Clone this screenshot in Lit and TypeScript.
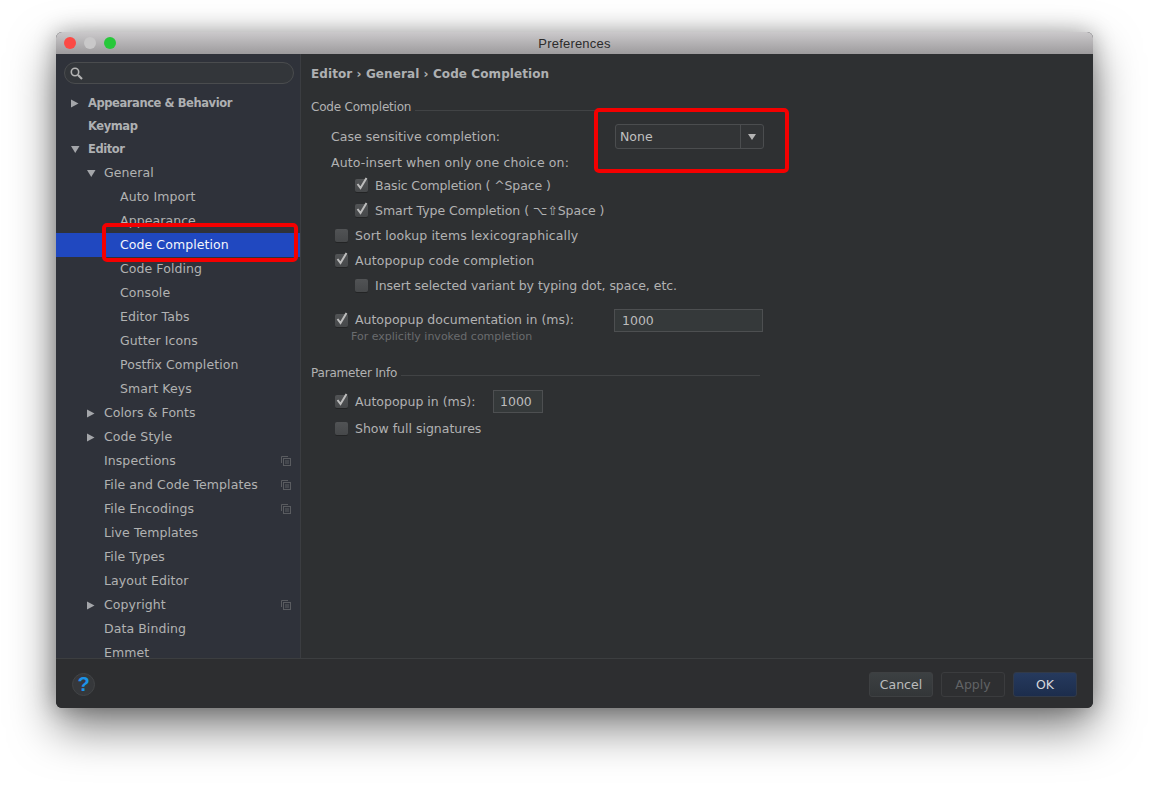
import { LitElement, html, css, svg } from "lit";
import { customElement } from "lit/decorators.js";

type Node = { t: string; lv: number; arrow?: "r" | "d"; bold?: boolean; sel?: boolean; copy?: boolean; last?: boolean };

const TREE: Node[] = [
  { t: "Appearance & Behavior", lv: 0, arrow: "r", bold: true },
  { t: "Keymap", lv: 0, bold: true },
  { t: "Editor", lv: 0, arrow: "d", bold: true },
  { t: "General", lv: 1, arrow: "d" },
  { t: "Auto Import", lv: 2 },
  { t: "Appearance", lv: 2 },
  { t: "Code Completion", lv: 2, sel: true },
  { t: "Code Folding", lv: 2 },
  { t: "Console", lv: 2 },
  { t: "Editor Tabs", lv: 2 },
  { t: "Gutter Icons", lv: 2 },
  { t: "Postfix Completion", lv: 2 },
  { t: "Smart Keys", lv: 2 },
  { t: "Colors & Fonts", lv: 1, arrow: "r" },
  { t: "Code Style", lv: 1, arrow: "r" },
  { t: "Inspections", lv: 1, copy: true },
  { t: "File and Code Templates", lv: 1, copy: true },
  { t: "File Encodings", lv: 1, copy: true },
  { t: "Live Templates", lv: 1 },
  { t: "File Types", lv: 1 },
  { t: "Layout Editor", lv: 1 },
  { t: "Copyright", lv: 1, arrow: "r", copy: true },
  { t: "Data Binding", lv: 1 },
  { t: "Emmet", lv: 1, last: true },
];

const arrowRight = svg`<path d="M1 1.5 L8.5 5.5 L1 9.5 Z" fill="#a4a6aa"/>`;
const arrowDown = svg`<path d="M1 2 H9.5 L5.25 9 Z" fill="#a4a6aa"/>`;

@customElement("app-root")
export class AppRoot extends LitElement {
  static styles = css`
    :host {
      display: block;
      height: 788px;
      box-sizing: border-box;
      padding: 32px 56px 80px;
      background: #fff;
      font-family: "DejaVu Sans", sans-serif;
      font-size: 12.5px;
      color: #b2b2b2;
      overflow: hidden;
    }
    .window {
      position: relative;
      height: 100%;
      display: flex;
      flex-direction: column;
      border-radius: 6px;
      background: #2e3032;
      box-shadow: 0 20px 46px rgba(0, 0, 0, 0.5), 0 0 22px rgba(0, 0, 0, 0.28);
    }
    .titlebar {
      height: 22px;
      flex: none;
      display: flex;
      align-items: center;
      justify-content: center;
      position: relative;
      background: linear-gradient(#cbc9cb, #9d9b9d);
      border-radius: 6px 6px 0 0;
      color: #2c2c2c;
      font-family: "Liberation Sans", sans-serif;
      font-size: 13px;
      letter-spacing: 0.2px;
    }
    .lights {
      position: absolute;
      left: 8px;
      top: 5px;
      display: flex;
      gap: 8px;
    }
    .light {
      width: 12px;
      height: 12px;
      border-radius: 50%;
    }
    .red { background: #fc4a45; }
    .grey { background: #c9c8c9; }
    .green { background: #27c83a; }
    .body {
      flex: 1;
      min-height: 0;
      display: flex;
      border-bottom: 1px solid #3c3e40;
    }
    .side {
      width: 244px;
      flex: none;
      background: #2f323a;
      border-right: 1px solid #3b3d41;
      overflow: hidden;
      display: flex;
      flex-direction: column;
    }
    .search {
      margin: 8px 6px 8px 8px;
      height: 22px;
      flex: none;
      box-sizing: border-box;
      border: 1px solid #4a4c4e;
      border-radius: 11px;
      background: #33363a;
      display: flex;
      align-items: center;
      padding-left: 5px;
    }
    .row {
      height: 24px;
      flex: none;
      display: flex;
      align-items: center;
      position: relative;
      line-height: 14px;
      letter-spacing: 0.08px;
    }
    .row.top { height: 22px; padding-bottom: 1px; }
    .row.last { height: 14px; padding-top: 5px; }
    .row.sel { background: #2048c0; color: #f4f6fb; }
    .row .arr {
      width: 11px;
      height: 11px;
      margin-right: 7px;
      flex: none;
    }
    .lv0 { padding-left: 14px; }
    .lv1 { padding-left: 30px; }
    .lv2 { padding-left: 46px; }
    .noarrow { margin-left: 18px; }
    .bold { font-weight: 700; color: #aeb0b2; font-size: 11.5px; letter-spacing: -0.42px; }
    .copy {
      position: absolute;
      left: 225px;
      top: 7px;
      width: 10px;
      height: 10px;
    }
    .main {
      flex: 1;
      min-width: 0;
      padding-left: 10px;
      display: flex;
      flex-direction: column;
    }
    .crumb {
      margin-top: 9px;
      height: 22px;
      display: flex;
      align-items: center;
      font-weight: 700;
      font-size: 12px;
      letter-spacing: 0.09px;
      color: #aeb0b2;
    }
    .title {
      height: 18px;
      display: flex;
      align-items: center;
      gap: 4px;
      font-size: 12px;
      letter-spacing: -0.2px;
      width: 449px;
    }
    .title i {
      flex: 1;
      height: 1px;
      background: #414345;
      margin-top: 5px;
    }
    .t1 { margin-top: 13px; }
    .t1 i { margin-top: 7px; }
    .t2 { margin-top: 20px; }
    .line {
      display: flex;
      align-items: center;
      height: 25px;
      padding-left: 24px;
      white-space: nowrap;
    }
    .plain {
      box-sizing: border-box;
      padding: 2px 0 0 20px;
      height: 24px;
      letter-spacing: 0.14px;
    }
    .nest { padding-left: 44px; }
    .tight { letter-spacing: -0.12px; }
    .slight { letter-spacing: -0.04px; }
    .wide { letter-spacing: 0.12px; }
    .box {
      width: 13px;
      height: 13px;
      box-sizing: border-box;
      flex: none;
      margin-right: 7px;
      border-radius: 2px;
      background: linear-gradient(#515355, #46484a);
      box-shadow: 0 1px 0 #232425;
      position: relative;
    }
    .box svg {
      position: absolute;
      left: 0;
      top: -3px;
      width: 14px;
      height: 15px;
    }
    .combo-row {
      margin-top: 8px;
      height: 25px;
      padding-left: 20px;
      display: flex;
      align-items: center;
    }
    .label { width: 284px; letter-spacing: 0.04px; }
    .combo {
      width: 149px;
      height: 25px;
      box-sizing: border-box;
      border: 1px solid #4b4d4f;
      border-radius: 3px;
      display: flex;
      align-items: center;
      background: #323436;
      padding-left: 4px;
    }
    .combo span { flex: 1; color: #c0c0c0; }
    .combo b {
      width: 22px;
      height: 100%;
      border-left: 1px solid #4b4d4f;
      display: flex;
      align-items: center;
      justify-content: center;
    }
    .input {
      box-sizing: border-box;
      height: 23px;
      border: 1px solid #4d4f51;
      background: #35393a;
      display: flex;
      align-items: center;
      color: #bcbcbc;
    }
    .doc { margin-top: 11px; height: 23px; }
    .doc .text { width: 259px; margin-top: -3px; }
    .doc .input { width: 149px; padding-left: 7px; }
    .hint {
      height: 14px;
      margin-top: -2px;
      padding-left: 40px;
      font-size: 11px;
      line-height: 14px;
      color: #6a6c6e;
    }
    .auto { margin-top: 8px; height: 23px; }
    .auto .text { width: 138px; }
    .auto .input { width: 50px; padding-left: 6px; }
    .show { margin-top: 3px; height: 24px; }
    .footer {
      height: 48px;
      flex: none;
      display: flex;
      align-items: center;
      padding: 1px 16px 0 16px;
      gap: 8px;
      border-radius: 0 0 6px 6px;
      background: #2d2e30;
    }
    .help {
      width: 23px;
      height: 23px;
      border-radius: 50%;
      box-sizing: border-box;
      border: 1px solid #424446;
      background: #36383b;
      color: #1b93e8;
      font: 700 20px/21px "Liberation Sans", sans-serif;
      text-align: center;
      margin-right: auto;
    }
    .btn {
      width: 64px;
      height: 25px;
      box-sizing: border-box;
      border: 1px solid #3e4042;
      border-radius: 3px;
      display: flex;
      align-items: center;
      justify-content: center;
      background: linear-gradient(#3c4042, #333638);
      color: #bcbcbc;
    }
    .btn.off {
      background: #2e2f31;
      border-color: #3b3c3e;
      color: #616365;
    }
    .btn.ok {
      background: linear-gradient(#263a5e, #1c2d4c);
      border-color: #323a48;
      color: #d6d8dc;
    }
    .mark {
      position: absolute;
      box-sizing: border-box;
      border: 4px solid #f40000;
      border-radius: 5px;
      pointer-events: none;
    }
    .m1 { left: 46px; top: 191px; width: 196px; height: 39px; }
    .m2 { left: 538px; top: 76px; width: 195px; height: 65px; }
  `;

  private check(on: boolean) {
    return html`<span class="box">${on
      ? html`<svg viewBox="0 0 14 15"><path d="M2.5 8 L5.5 12 L11.5 2" fill="none" stroke="#bdbdbd" stroke-width="2"/></svg>`
      : ""}</span>`;
  }

  private row(n: Node) {
    const classes = ["row", `lv${n.lv}`, n.sel ? "sel" : "", n.lv === 0 ? "top" : "", n.last ? "last" : ""].join(" ");
    return html`<div class=${classes}>
      ${n.arrow
        ? html`<svg class="arr" viewBox="0 0 11 11">${n.arrow === "r" ? arrowRight : arrowDown}</svg>`
        : ""}
      <span class="${n.arrow ? "" : "noarrow"} ${n.bold ? "bold" : ""}">${n.t}</span>
      ${n.copy
        ? html`<svg class="copy" viewBox="0 0 10 10" fill="none" stroke="#5a5c60">
            <path d="M0.5 7 V0.5 H7"/>
            <rect x="2.5" y="2.5" width="7" height="7"/>
            <path d="M4 5 H8 M4 7 H8"/>
          </svg>`
        : ""}
    </div>`;
  }

  render() {
    return html`<div class="window">
      <div class="titlebar">
        <div class="lights">
          <span class="light red"></span><span class="light grey"></span><span class="light green"></span>
        </div>
        Preferences
      </div>
      <div class="body">
        <aside class="side">
          <div class="search">
            <svg width="13" height="13" viewBox="0 0 13 13" fill="none" stroke="#b4b4b4" stroke-width="1.6">
              <circle cx="5" cy="5" r="3.7"/><path d="M8 8 L12 12" stroke-width="2.2"/>
            </svg>
          </div>
          ${TREE.map((n) => this.row(n))}
        </aside>
        <main class="main">
          <div class="crumb">Editor › General › Code Completion</div>
          <div class="title t1"><span>Code Completion</span><i></i></div>
          <div class="combo-row">
            <span class="label">Case sensitive completion:</span>
            <div class="combo">
              <span>None</span>
              <b><svg width="8" height="6" viewBox="0 0 8 6"><path d="M0 0 H8 L4 6 Z" fill="#b4b4b4"/></svg></b>
            </div>
          </div>
          <div class="line plain">Auto-insert when only one choice on:</div>
          <div class="line nest tight">${this.check(true)}Basic Completion ( ^Space )</div>
          <div class="line nest slight">${this.check(true)}Smart Type Completion ( ⌥⇧Space )</div>
          <div class="line wide">${this.check(false)}Sort lookup items lexicographically</div>
          <div class="line wide">${this.check(true)}Autopopup code completion</div>
          <div class="line nest slight">${this.check(false)}Insert selected variant by typing dot, space, etc.</div>
          <div class="line doc">
            ${this.check(true)}<span class="text">Autopopup documentation in (ms):</span>
            <div class="input">1000</div>
          </div>
          <div class="hint">For explicitly invoked completion</div>
          <div class="title t2"><span>Parameter Info</span><i></i></div>
          <div class="line auto">
            ${this.check(true)}<span class="text">Autopopup in (ms):</span>
            <div class="input">1000</div>
          </div>
          <div class="line show">${this.check(false)}Show full signatures</div>
        </main>
      </div>
      <div class="footer">
        <div class="help">?</div>
        <div class="btn">Cancel</div>
        <div class="btn off">Apply</div>
        <div class="btn ok">OK</div>
      </div>
      <div class="mark m1"></div>
      <div class="mark m2"></div>
    </div>`;
  }
}
